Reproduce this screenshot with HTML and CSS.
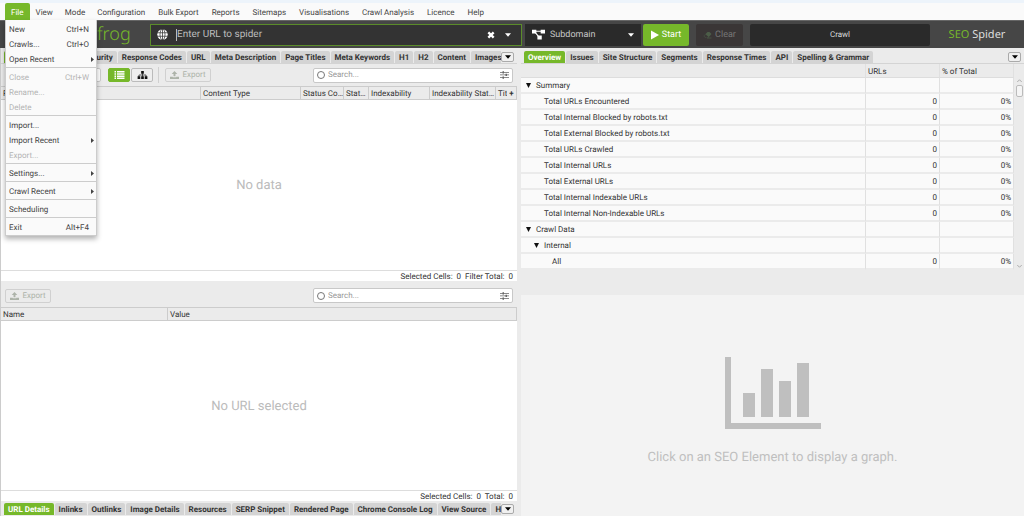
FILE: index.html
```html
<!DOCTYPE html>
<html lang="en">
<head>
<meta charset="utf-8">
<title>SEO Spider</title>
<link rel="stylesheet" href="styles.css">
</head>
<body>
<svg class="defs" aria-hidden="true">
  <symbol id="upload" viewBox="0 0 16 14"><path d="M8 0l5 5h-3.300v4H6.300V5H3zM0 10h5v1h6v-1h5v4H0z"/></symbol>
  <symbol id="down" viewBox="0 0 10 6"><path d="M0 0h10L5 6z"/></symbol>
  <symbol id="drop" viewBox="0 0 10 10"><path d="M0 0h10L5 10z"/></symbol>
  <symbol id="right" viewBox="0 0 6 10"><path d="M0 0l6 5-6 5z"/></symbol>
  <symbol id="sliders" viewBox="0 0 18 16"><path d="M0 2h18v1.500H0zM0 7.200h18v1.500H0zM0 12.500h18V14H0zM5 .5h3v4.500H5zM11 5.700h3v4.500h-3zM5 11h3v4.500H5z"/></symbol>
</svg>

<div class="strip"></div>
<nav class="menubar">
  <div class="menu-root">
    <button class="menu-btn active">File</button>
    <div class="dropdown">
      <div class="group">
        <button class="item">New<span>Ctrl+N</span></button>
        <button class="item">Crawls...<span>Ctrl+O</span></button>
        <button class="item sub">Open Recent<svg><use href="#right"/></svg></button>
      </div>
      <div class="group">
        <button class="item" disabled>Close<span>Ctrl+W</span></button>
        <button class="item" disabled>Rename...</button>
        <button class="item" disabled>Delete</button>
      </div>
      <div class="group">
        <button class="item">Import...</button>
        <button class="item sub">Import Recent<svg><use href="#right"/></svg></button>
        <button class="item" disabled>Export...</button>
      </div>
      <div class="group"><button class="item sub">Settings...<svg><use href="#right"/></svg></button></div>
      <div class="group"><button class="item sub">Crawl Recent<svg><use href="#right"/></svg></button></div>
      <div class="group"><button class="item">Scheduling</button></div>
      <div class="group"><button class="item">Exit<span>Alt+F4</span></button></div>
    </div>
  </div>
  <button class="menu-btn">View</button>
  <button class="menu-btn">Mode</button>
  <button class="menu-btn">Configuration</button>
  <button class="menu-btn">Bulk Export</button>
  <button class="menu-btn">Reports</button>
  <button class="menu-btn">Sitemaps</button>
  <button class="menu-btn">Visualisations</button>
  <button class="menu-btn">Crawl Analysis</button>
  <button class="menu-btn">Licence</button>
  <button class="menu-btn">Help</button>
</nav>

<header class="topbar">
  <div class="logo">frog</div>
  <div class="urlbox">
    <svg class="globe" viewBox="0 0 22 22"><circle cx="11" cy="11" r="10.500" fill="#fff"/><path d="M0 7.500h22M0 14.500h22M11 0v22" stroke="#333" stroke-width="1.500"/><ellipse cx="11" cy="11" rx="5" ry="11" fill="none" stroke="#333" stroke-width="1.500"/></svg>
    <input type="text" placeholder="Enter URL to spider" aria-label="Enter URL to spider">
    <button class="plain" aria-label="Clear URL"><svg class="cross" viewBox="0 0 12 12"><path d="M2 2l8 8M10 2l-8 8" stroke="#fff" stroke-width="3.500"/></svg></button>
    <button class="plain" aria-label="Recent URLs"><svg class="caret"><use href="#down"/></svg></button>
  </div>
  <div class="mode">
    <svg class="nodes" viewBox="0 0 24 20"><path d="M0 1h8v7H0zM16 1h8v7h-8zM10 12h8v7h-8z" fill="#fff"/><path d="M6 4h12M5 5l8 10" stroke="#fff" stroke-width="2"/></svg>
    <select aria-label="Crawl scope"><option>Subdomain</option></select>
    <svg class="caret"><use href="#down"/></svg>
  </div>
  <button class="start"><svg viewBox="0 0 9 10"><path d="M0 0l9 5-9 5z"/></svg>Start</button>
  <button class="clear" disabled><svg viewBox="0 0 18 14"><path d="M1 9l8-8h4l4 4-7 8H5z" fill="#4c5d48"/><path d="M5 5.500l6 5.500-1.500 1.500H5.500L2 9z" fill="#3a3636"/><path d="M8 13h9" stroke="#4c5d48" stroke-width="1.500"/></svg>Clear</button>
  <div class="progress">Crawl</div>
  <div class="brand"><span>SEO</span> Spider</div>
</header>

<main class="panes">
  <section class="left">
    <div class="tabs">
      <div class="tablist">
        <button class="tab on">Internal</button><button class="tab">External</button><button class="tab">Security</button><button class="tab">Response Codes</button><button class="tab">URL</button><button class="tab">Meta Description</button><button class="tab">Page Titles</button><button class="tab">Meta Keywords</button><button class="tab">H1</button><button class="tab">H2</button><button class="tab">Content</button><button class="tab">Images</button>
      </div>
      <button class="more" aria-label="More tabs"><svg><use href="#down"/></svg></button>
    </div>
    <div class="tools">
      <div class="filter"></div>
      <button class="toggle on" aria-label="List view"><svg viewBox="0 0 22 16"><path d="M1 0h3v3H1zM1 4.500h3v3H1zM1 9h3v3H1zM1 13h3v3H1zM6 0h15v3H6zM6 4.500h15v3H6zM6 9h15v3H6zM6 13h15v3H6z" fill="#fff"/></svg></button>
      <button class="toggle" aria-label="Tree view"><svg viewBox="0 0 22 18"><path d="M8 0h6v6H8zM0 12h6v6H0zM8 12h6v6H8zM16 12h6v6h-6z"/><path d="M11 5v8M3 13V9h16v4" fill="none" stroke="#111" stroke-width="1.500"/></svg></button>
      <i class="vr"></i>
      <button class="export" disabled><svg><use href="#upload"/></svg>Export</button>
      <div class="search">
        <i class="ring"></i><input type="text" placeholder="Search..." aria-label="Search URLs">
        <button class="plain" aria-label="Search options"><svg class="opts"><use href="#sliders"/></svg></button>
      </div>
    </div>
    <table class="grid">
      <colgroup><col><col class="w100"><col class="w43"><col class="w25"><col class="w61"><col class="w66"><col class="w11"><col class="w10"></colgroup>
      <thead><tr><th>Row</th><th>Content Type</th><th>Status Code</th><th>Status</th><th>Indexability</th><th>Indexability Status</th><th class="cut">Title 1</th><th class="add">+</th></tr></thead>
    </table>
    <div class="empty">No data</div>
    <div class="status">Selected Cells:&nbsp; 0&nbsp; Filter Total:&nbsp; 0</div>

    <div class="tools lower">
      <button class="export" disabled><svg><use href="#upload"/></svg>Export</button>
      <div class="search">
        <i class="ring"></i><input type="text" placeholder="Search..." aria-label="Search details">
        <button class="plain" aria-label="Detail search options"><svg class="opts"><use href="#sliders"/></svg></button>
      </div>
    </div>
    <table class="grid">
      <colgroup><col class="third"><col></colgroup>
      <thead><tr><th>Name</th><th>Value</th></tr></thead>
    </table>
    <div class="empty">No URL selected</div>
    <div class="status">Selected Cells:&nbsp; 0&nbsp; Total:&nbsp; 0</div>
    <div class="tabs bottom">
      <div class="tablist">
        <button class="tab on">URL Details</button><button class="tab">Inlinks</button><button class="tab">Outlinks</button><button class="tab">Image Details</button><button class="tab">Resources</button><button class="tab">SERP Snippet</button><button class="tab">Rendered Page</button><button class="tab">Chrome Console Log</button><button class="tab">View Source</button><button class="tab">HTTP Headers</button>
      </div>
      <button class="more" aria-label="More detail tabs"><svg><use href="#down"/></svg></button>
    </div>
  </section>

  <section class="right">
    <div class="tabs">
      <div class="tablist">
        <button class="tab on">Overview</button><button class="tab">Issues</button><button class="tab">Site Structure</button><button class="tab">Segments</button><button class="tab">Response Times</button><button class="tab">API</button><button class="tab">Spelling &amp; Grammar</button>
      </div>
      <button class="more" aria-label="More overview tabs"><svg><use href="#down"/></svg></button>
    </div>
    <div class="overview">
      <table class="tree">
        <colgroup><col><col class="w74"><col class="w74"></colgroup>
        <thead><tr><th></th><th>URLs</th><th>% of Total</th></tr></thead>
        <tbody>
          <tr><td class="l0"><svg><use href="#drop"/></svg>Summary</td><td></td><td></td></tr>
          <tr><td class="l1">Total URLs Encountered</td><td>0</td><td>0%</td></tr>
          <tr><td class="l1">Total Internal Blocked by robots.txt</td><td>0</td><td>0%</td></tr>
          <tr><td class="l1">Total External Blocked by robots.txt</td><td>0</td><td>0%</td></tr>
          <tr><td class="l1">Total URLs Crawled</td><td>0</td><td>0%</td></tr>
          <tr><td class="l1">Total Internal URLs</td><td>0</td><td>0%</td></tr>
          <tr><td class="l1">Total External URLs</td><td>0</td><td>0%</td></tr>
          <tr><td class="l1">Total Internal Indexable URLs</td><td>0</td><td>0%</td></tr>
          <tr><td class="l1">Total Internal Non-Indexable URLs</td><td>0</td><td>0%</td></tr>
          <tr><td class="l0"><svg><use href="#drop"/></svg>Crawl Data</td><td></td><td></td></tr>
          <tr><td class="l0 deep"><svg><use href="#drop"/></svg>Internal</td><td></td><td></td></tr>
          <tr><td class="l2">All</td><td>0</td><td>0%</td></tr>
        </tbody>
      </table>
      <div class="scroll">
        <svg viewBox="0 0 6 4"><path d="M0 4l3-3 3 3"/></svg>
        <i class="thumb"></i>
        <svg class="end" viewBox="0 0 6 4"><path d="M0 0l3 3 3-3"/></svg>
      </div>
    </div>
    <div class="graph">
      <svg viewBox="0 0 96 72"><path d="M0 0h6v66h90v6H0zM18 36h12v24H18zM36 12h12v48H36zM54 24h12v36H54zM72 6h12v54H72z"/></svg>
      <p>Click on an SEO Element to display a graph.</p>
    </div>
  </section>
</main>
</body>
</html>
```

FILE: styles.css
```css
* { box-sizing: border-box; }
html, body { height: 100%; }
body {
  margin: 0;
  display: flex;
  flex-direction: column;
  background: #ebebeb;
  color: #333;
  font: 8px/12px Roboto, "Liberation Sans", sans-serif;
  text-rendering: geometricPrecision;
  overflow: hidden;
}
button, input, select { font: inherit; color: inherit; margin: 0; padding: 0; border: 0; background: none; white-space: nowrap; text-rendering: inherit; }
input { outline: 0; min-width: 0; }
svg { flex: none; fill: currentColor; }
.defs { position: absolute; width: 0; height: 0; }
.plain { display: flex; align-items: center; }

.strip { height: 3px; background: #edf4fb; }
.menubar { display: flex; height: 17px; padding: 0 5px; background: #fafafa; color: #444; }
.menu-root { position: relative; display: flex; }
.menu-btn { padding: 2px 6px 0; height: 17px; }
.menu-btn:nth-child(n+4) { padding-right: 7px; }
.menu-btn.active { background: #76b82a; color: #fff; border-radius: 2px 2px 0 0; }

.dropdown {
  position: absolute;
  z-index: 5;
  top: 17px;
  left: 0;
  width: 92px;
  background: #fafafa;
  border: solid #ccc;
  border-width: 0 1px 1px;
  box-shadow: 0 3px 5px rgba(0, 0, 0, .3);
}
.group { padding: 1px 0; border-top: 1px solid #ccc; }
.group:first-child { border-top: 0; }
.item { display: flex; align-items: center; justify-content: space-between; width: 100%; height: 15px; padding: 2px 7px 0 3px; }
.item:disabled { color: #b4b4b4; }
.item svg { width: 3px; height: 5px; }
.item.sub { padding-right: 2px; }

.topbar { display: flex; align-items: center; height: 28px; padding: 3px 0; background: #464646; color: #ddd; border-top: 1px solid #666; }
.topbar > * { height: 22px; }
.logo { flex: none; width: 150px; padding-left: 97px; color: #76b82a; font: 400 18px/20px "Noto Sans", sans-serif; font-weight: 300; }
.urlbox { flex: 372 372 372px; display: flex; align-items: center; gap: 8px; padding: 0 10px 0 6px; background: #333; border: 1px solid #5b8c2a; }
.urlbox input { flex: 1; height: 12px; border-left: 1px solid #bbb; font-size: 10px; }
.urlbox input::placeholder { color: #bdbdbd; opacity: 1; }
.globe { width: 11px; height: 11px; }
.cross { width: 8px; height: 8px; }
.plain + .plain { margin-left: 2px; }
.caret { width: 6px; height: 4px; color: #fff; }
.mode { flex: 116 116 116px; display: flex; align-items: center; gap: 5px; margin-left: 3px; padding: 0 7px; background: #2a2a2a; font-size: 9px; }
.mode select { flex: 1; min-width: 0; appearance: none; outline: 0; color: #c8c8c8; }
.nodes { width: 13px; height: 11px; }
.start, .clear { display: flex; align-items: center; justify-content: center; gap: 3px; border-radius: 2px; font-size: 9px; }
.start { flex: 46 46 46px; margin-left: 2px; background: #76b82a; color: #fff; }
.start svg { width: 8px; height: 10px; }
.clear { flex: 47 47 47px; margin-left: 7px; background: #3a3636; color: #777; }
.clear svg { width: 9px; height: 8px; }
.progress { flex: 180 180 180px; margin-left: 7px; background: #2a2a2a; border-radius: 2px; text-align: center; line-height: 22px; }
.brand { flex: 94 94 94px; text-align: center; color: #ddd; font: 11px/22px "Noto Sans", sans-serif; white-space: nowrap; }
.brand span { color: #76b82a; }

.panes { flex: 1; min-height: 0; display: grid; grid-template-columns: 517fr 503fr; gap: 4px; }
.left, .right { display: flex; flex-direction: column; min-width: 0; min-height: 0; }
.left { border-left: 1px solid #ccc; }

.tabs { display: flex; align-items: center; height: 16px; padding: 3px 3px 0 3px; border-bottom: 1px solid #d4d4d4; }
.tablist { flex: 1; display: flex; gap: 1px; min-width: 0; overflow: hidden; }
.tab { flex: none; height: 12px; padding: 1px 4px 0; line-height: 12px; background: #d4d4d4; border-radius: 2px 2px 0 0; font-weight: 700; }
.tab.on { background: #76b82a; color: #fff; }
.more { display: flex; align-items: center; justify-content: center; width: 13px; height: 10px; border: 1px solid #aaa; border-radius: 2px; background: #f0f0f0; color: #000; }
.more svg { width: 6px; height: 4px; }
.bottom { height: 15px; padding-top: 0; border: 0; }

.tools { display: flex; align-items: center; height: 22px; padding: 0 4px; }
.lower { height: 26px; padding-top: 4px; }
.filter { width: 96px; height: 14px; margin-right: 7px; background: #fff; border: 1px solid #ccc; border-radius: 2px; }
.toggle { display: flex; align-items: center; justify-content: center; width: 22px; height: 14px; margin-right: 1px; border: 1px solid #bbb; border-radius: 2px; background: #eee; color: #111; }
.toggle svg { width: 11px; height: 8px; }
.toggle.on { background: #76b82a; border-color: #76b82a; }
.vr { width: 1px; height: 16px; margin: 0 6px 0 4px; background: #d0d0d0; }
.export { display: flex; align-items: center; justify-content: center; gap: 3px; width: 46px; height: 14px; border: 1px solid #d0d0d0; border-radius: 2px; color: #adb3a9; }
.export svg { width: 9px; height: 8px; }
.search { display: flex; align-items: center; gap: 3px; width: 200px; height: 15px; margin-left: auto; padding: 0 3px; background: #fff; border: 1px solid #c8c8c8; border-radius: 2px; }
.search input { flex: 1; }
.search input::placeholder { color: #999; opacity: 1; }
.ring { width: 8px; height: 8px; border: 1px solid #777; border-radius: 50%; }
.opts { width: 9px; height: 8px; color: #666; }

table { border-collapse: separate; border-spacing: 0; table-layout: fixed; width: 100%; }
th { font-weight: 400; text-align: left; }
.grid th { height: 14px; padding: 1px 0 0 2px; line-height: 11px; border: solid #ccc; border-width: 1px 1px 1px 0; overflow: hidden; text-overflow: ellipsis; white-space: nowrap; }
.grid .cut { text-overflow: clip; border-right: 0; }
.grid .add { padding: 0; text-align: center; font-weight: 700; }
.w100 { width: 100px; } .w43 { width: 43px; } .w25 { width: 25px; } .w61 { width: 61px; } .w66 { width: 66px; } .w11 { width: 11px; } .w10 { width: 10px; } .w74 { width: 74px; }
.third { width: 167px; }
.empty { flex: 1; display: grid; place-items: center; padding-top: 3px; background: #fff; color: #bbb; font-size: 13px; }
.status { height: 11px; padding-right: 4px; background: #fff; border-top: 1px solid #ddd; text-align: right; line-height: 11px; }

.overview { display: flex; }
.tree { flex: 1; }
.tree th, .tree td { padding: 1px 2px 0; border-right: 1px solid #e0e0e0; white-space: nowrap; }
.tree th { height: 14px; }
.tree td { height: 16px; line-height: 13px; background: #fafafa; border-bottom: 2px solid #ebebeb; text-align: right; }
.tree thead th { padding-top: 2px; line-height: 11px; border-bottom: 1px solid #ddd; }
.tree td:first-child { text-align: left; }
.tree .l0 { padding-left: 5px; }
.tree .l0 svg { width: 5px; height: 5px; margin-right: 5px; color: #111; }
.tree .deep { padding-left: 13px; }
.tree .l1 { padding-left: 23px; }
.tree .l2 { padding-left: 31px; }
.scroll { display: flex; flex-direction: column; align-items: center; width: 10px; padding: 15px 0 2px; }
.scroll svg { width: 5px; height: 3px; fill: none; stroke: #999; }
.scroll .end { margin-top: auto; }
.thumb { width: 7px; height: 12px; margin-top: 3px; border: 1px solid #bbb; border-radius: 2px; background: #f5f5f5; }
.graph { flex: 1; display: flex; flex-direction: column; align-items: center; justify-content: center; gap: 21px; margin-top: 25px; padding-top: 12px; background: #f3f3f3; color: #bfbfbf; font-size: 13px; line-height: 16px; }
.graph svg { width: 96px; height: 72px; }
.graph p { margin: 0; }
```
